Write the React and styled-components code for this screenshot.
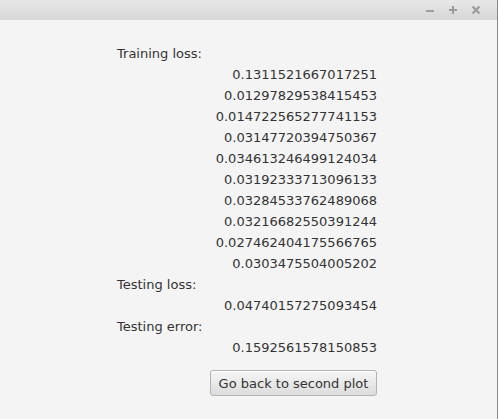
import React from "react";
import styled, { createGlobalStyle } from "styled-components";

const Global = createGlobalStyle`
  html, body { margin: 0; padding: 0; background: #f4f4f4; }
  #root { width: 498px; height: 419px; }
`;

const Window = styled.div`
  width: 498px;
  height: 419px;
  box-sizing: border-box;
  border-right: 1px solid #8a8a8a;
  background: #f4f4f4;
  display: flex;
  flex-direction: column;
  font-family: "DejaVu Sans", sans-serif;
  font-size: 13px;
  color: #333333;
`;

const TitleBar = styled.div`
  height: 20px;
  flex: none;
  background: linear-gradient(#e8e8e8, #d6d6d6);
  display: flex;
  justify-content: flex-end;
  align-items: center;
  gap: 0;
  padding-right: 10px;
`;

const TitleButton = styled.div`
  width: 23px;
  height: 20px;
  display: flex;
  align-items: center;
  justify-content: center;
`;

const Content = styled.div`
  display: flex;
  flex-direction: column;
  align-items: stretch;
  width: 260px;
  margin-left: 117px;
  padding-top: 23px;
`;

const Label = styled.div`
  line-height: 21px;
  height: 21px;
  white-space: nowrap;
`;

const Value = styled.div`
  line-height: 21px;
  height: 21px;
  text-align: right;
  white-space: nowrap;
`;

const ButtonRow = styled.div`
  display: flex;
  justify-content: flex-end;
  margin-top: 12px;
`;

const Button = styled.button`
  width: 167px;
  height: 26px;
  box-sizing: border-box;
  border: 1px solid #b3b3b3;
  border-radius: 3px;
  background: linear-gradient(#f6f6f6, #dcdcdc);
  box-shadow: inset 0 1px 0 #ffffff;
  font-family: "DejaVu Sans", sans-serif;
  font-size: 13px;
  color: #333333;
  padding: 0;
  margin: 0;
`;

const training = [
  "0.1311521667017251",
  "0.01297829538415453",
  "0.014722565277741153",
  "0.03147720394750367",
  "0.034613246499124034",
  "0.03192333713096133",
  "0.03284533762489068",
  "0.03216682550391244",
  "0.027462404175566765",
  "0.0303475504005202",
];

export default function App() {
  return (
    <>
      <Global />
      <Window>
        <TitleBar>
          <TitleButton>
            <svg width="10" height="10" viewBox="0 0 10 10">
              <rect x="1" y="5" width="8" height="2" fill="#9c9c9c" />
            </svg>
          </TitleButton>
          <TitleButton>
            <svg width="10" height="10" viewBox="0 0 10 10">
              <rect x="1" y="4" width="8" height="2" fill="#9c9c9c" />
              <rect x="4" y="1" width="2" height="8" fill="#9c9c9c" />
            </svg>
          </TitleButton>
          <TitleButton>
            <svg width="10" height="10" viewBox="0 0 10 10">
              <path d="M1.5 1.5 L8.5 8.5 M8.5 1.5 L1.5 8.5" stroke="#9c9c9c" strokeWidth="2.2" />
            </svg>
          </TitleButton>
        </TitleBar>
        <Content>
          <Label>Training loss:</Label>
          {training.map((v) => (
            <Value key={v}>{v}</Value>
          ))}
          <Label>Testing loss:</Label>
          <Value>0.04740157275093454</Value>
          <Label>Testing error:</Label>
          <Value>0.1592561578150853</Value>
          <ButtonRow>
            <Button>Go back to second plot</Button>
          </ButtonRow>
        </Content>
      </Window>
    </>
  );
}
